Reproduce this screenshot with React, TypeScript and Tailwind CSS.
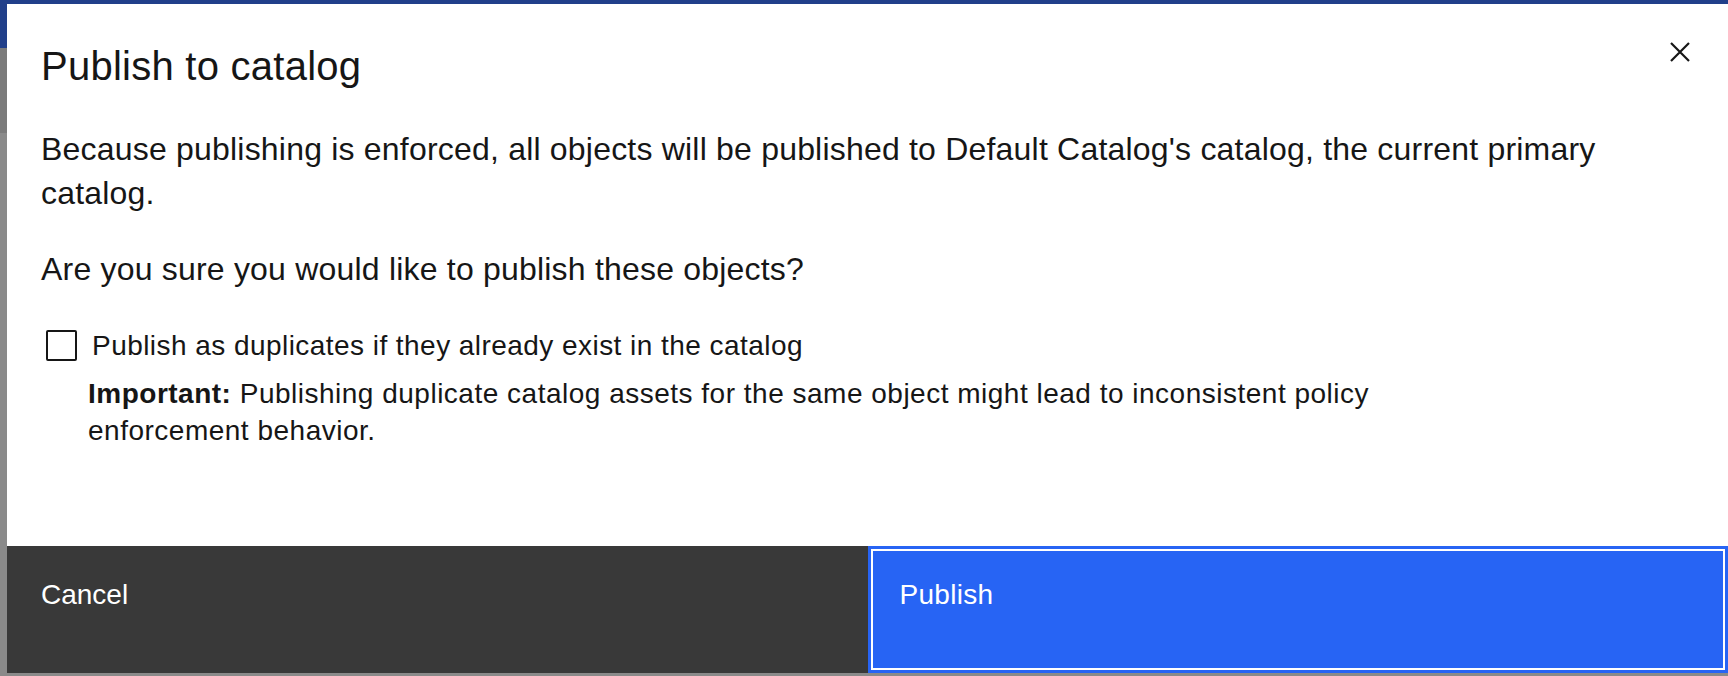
export default function App() {
  return (
    <div className="relative h-[676px] w-[1728px] overflow-hidden bg-[#8a8a8a]" style={{ fontFamily: '"Liberation Sans", Arial, sans-serif' }}>
      {/* dimmed page behind the dialog */}
      <div className="absolute left-0 top-0 h-[48px] w-full bg-[#213f8a]" />
      <div className="absolute left-0 top-[48px] h-[85px] w-full bg-[#7b7b7b]" />

      {/* Modal */}
      <div className="absolute left-[7px] top-[4px] flex h-[669px] w-[1721px] flex-col bg-white text-[#161616]">
        <div className="flex flex-1 flex-col pl-[34px] pt-[34px]">
          <div className="flex items-start justify-between">
            <h2 className="text-[40px] leading-[56px] font-normal tracking-[0.25px]">Publish to catalog</h2>
            <button className="mr-[38px] mt-[4px] h-[20px] w-[20px] p-0 text-[#161616]" aria-label="Close">
              <svg viewBox="0 0 20 20" width="20" height="20" fill="none" stroke="currentColor" strokeWidth="2.2">
                <path d="M1 1L19 19M19 1L1 19" />
              </svg>
            </button>
          </div>

          <p className="mt-[33px] w-[1620px] text-[32px] leading-[44px] tracking-[0.2px]">
            Because publishing is enforced, all objects will be published to Default Catalog's catalog, the current primary catalog.
          </p>
          <p className="mt-[32px] text-[32px] leading-[44px] tracking-[0.2px]">Are you sure you would like to publish these objects?</p>

          <div className="mt-[36px] flex items-center">
            <span className="ml-[5px] h-[31px] w-[31px] rounded-[2px] border-[2px] border-[#161616]" />
            <span className="ml-[15px] text-[28px] leading-[37px] tracking-[0.45px]">Publish as duplicates if they already exist in the catalog</span>
          </div>
          <p className="ml-[47px] mt-[11px] w-[1340px] text-[28px] leading-[37px] tracking-[0.5px]">
            <span className="font-bold">Important:</span> Publishing duplicate catalog assets for the same object might lead to inconsistent policy enforcement behavior.
          </p>
        </div>

        {/* Footer */}
        <div className="grid h-[127px] grid-cols-2">
          <button className="flex items-start bg-[#393939] pl-[34px] pt-[30px] text-left text-[28px] leading-[37px] text-white">
            Cancel
          </button>
          <button className="flex items-start border-[3px] border-[#2764f4] bg-[#2764f4] pl-[29px] pt-[27px] text-left text-[28px] leading-[37px] tracking-[0.3px] text-white outline outline-[2px] outline-offset-[-5px] outline-white">
            Publish
          </button>
        </div>
      </div>
    </div>
  )
}
